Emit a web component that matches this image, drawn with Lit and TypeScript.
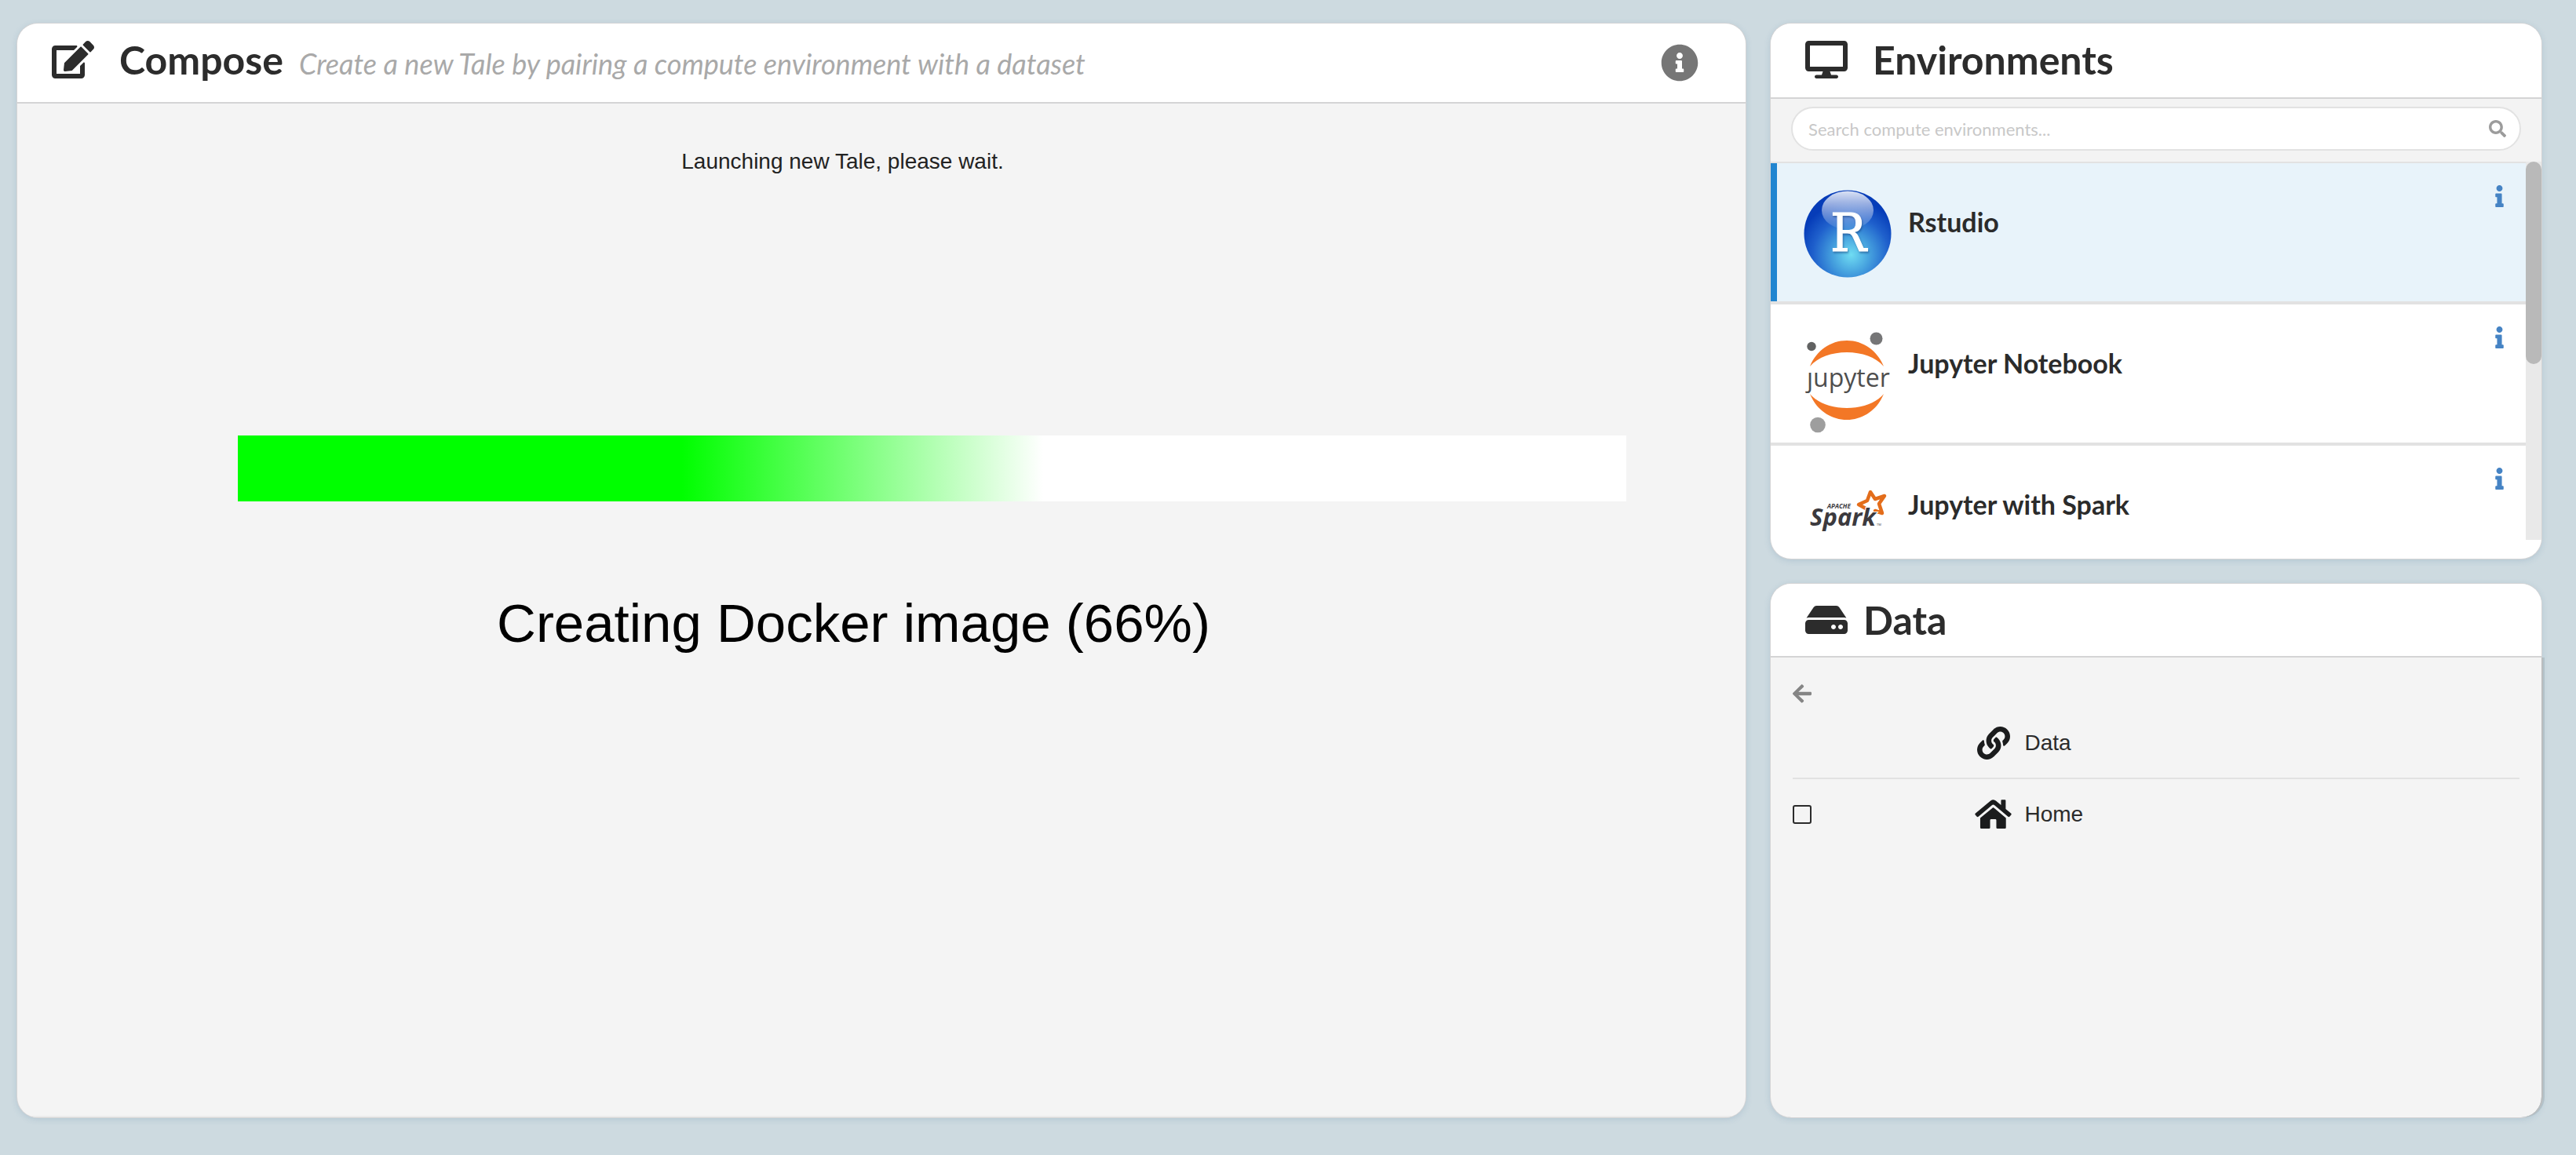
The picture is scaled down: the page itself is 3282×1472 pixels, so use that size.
import { LitElement, html, css, svg } from "lit";
import { customElement, property, state } from "lit/decorators.js";
import { classMap } from "lit/directives/class-map.js";

const ICONS: Record<string, { box: string; d: string }> = {
  edit: {
    box: "0 0 576 512",
    d: "M402.6 83.2l90.2 90.2c3.8 3.8 3.8 10 0 13.8L274.4 405.6l-92.8 10.3c-12.4 1.4-22.9-9.1-21.5-21.5l10.3-92.8L388.8 83.2c3.8-3.8 10-3.8 13.8 0zm162-22.9l-48.8-48.8c-15.2-15.2-39.9-15.2-55.2 0l-35.4 35.4c-3.8 3.8-3.8 10 0 13.8l90.2 90.2c3.8 3.8 10 3.8 13.8 0l35.4-35.4c15.2-15.3 15.2-40 0-55.2zM384 346.2V448H64V128h229.8c3.2 0 6.2-1.3 8.5-3.5l40-40c7.6-7.6 2.2-20.5-8.5-20.5H48C21.5 64 0 85.5 0 112v352c0 26.5 21.5 48 48 48h352c26.5 0 48-21.5 48-48V306.2c0-10.7-12.9-16-20.5-8.5l-40 40c-2.2 2.3-3.5 5.3-3.5 8.5z",
  },
  desktop: {
    box: "0 0 576 512",
    d: "M528 0H48C21.5 0 0 21.5 0 48v320c0 26.5 21.5 48 48 48h192l-16 48h-72c-13.3 0-24 10.7-24 24s10.7 24 24 24h272c13.3 0 24-10.7 24-24s-10.7-24-24-24h-72l-16-48h192c26.5 0 48-21.5 48-48V48c0-26.5-21.5-48-48-48zm-16 352H64V64h448v288z",
  },
  hdd: {
    box: "0 0 576 512",
    d: "M576 304v96c0 26.51-21.49 48-48 48H48c-26.51 0-48-21.49-48-48v-96c0-26.51 21.49-48 48-48h480c26.51 0 48 21.49 48 48zm-48-80a79.557 79.557 0 0 1 30.777 6.165L462.25 85.374A48.003 48.003 0 0 0 422.311 64H153.689a48 48 0 0 0-39.938 21.374L17.223 230.165A79.557 79.557 0 0 1 48 224h480zm-48 96c-17.673 0-32 14.327-32 32s14.327 32 32 32 32-14.327 32-32-14.327-32-32-32zm-96 0c-17.673 0-32 14.327-32 32s14.327 32 32 32 32-14.327 32-32-14.327-32-32-32z",
  },
  infoCircle: {
    box: "0 0 512 512",
    d: "M256 8C119.043 8 8 119.083 8 256c0 136.997 111.043 248 248 248s248-111.003 248-248C504 119.083 392.957 8 256 8zm0 110c23.196 0 42 18.804 42 42s-18.804 42-42 42-42-18.804-42-42 18.804-42 42-42zm56 254c0 6.627-5.373 12-12 12h-88c-6.627 0-12-5.373-12-12v-24c0-6.627 5.373-12 12-12h12v-64h-12c-6.627 0-12-5.373-12-12v-24c0-6.627 5.373-12 12-12h64c6.627 0 12 5.373 12 12v100h12c6.627 0 12 5.373 12 12v24z",
  },
  info: {
    box: "0 0 192 512",
    d: "M20 424.229h20V279.771H20c-11.046 0-20-8.954-20-20V212c0-11.046 8.954-20 20-20h112c11.046 0 20 8.954 20 20v212.229h20c11.046 0 20 8.954 20 20V492c0 11.046-8.954 20-20 20H20c-11.046 0-20-8.954-20-20v-47.771c0-11.046 8.954-20 20-20zM96 0C56.235 0 24 32.235 24 72s32.235 72 72 72 72-32.235 72-72S135.764 0 96 0z",
  },
  search: {
    box: "0 0 512 512",
    d: "M505 442.7L405.3 343c-4.5-4.5-10.6-7-17-7H372c27.6-35.3 44-79.7 44-128C416 93.1 322.9 0 208 0S0 93.1 0 208s93.1 208 208 208c48.3 0 92.7-16.4 128-44v16.3c0 6.4 2.5 12.5 7 17l99.7 99.7c9.4 9.4 24.6 9.4 33.9 0l28.3-28.3c9.4-9.4 9.4-24.6.1-34zM208 336c-70.7 0-128-57.2-128-128 0-70.7 57.2-128 128-128 70.7 0 128 57.2 128 128 0 70.7-57.2 128-128 128z",
  },
  arrowLeft: {
    box: "0 0 448 512",
    d: "M257.5 445.1l-22.2 22.2c-9.4 9.4-24.6 9.4-33.9 0L7 273c-9.4-9.4-9.4-24.6 0-33.9L201.4 44.7c9.4-9.4 24.6-9.4 33.9 0l22.2 22.2c9.5 9.5 9.3 25-.4 34.3L136.6 216H424c13.3 0 24 10.7 24 24v32c0 13.3-10.7 24-24 24H136.6l120.5 114.8c9.8 9.3 10 24.8.4 34.3z",
  },
  link: {
    box: "0 0 512 512",
    d: "M326.612 185.391c59.747 59.809 58.927 155.698.36 214.59-.11.12-.24.25-.36.37l-67.2 67.2c-59.27 59.27-155.699 59.262-214.96 0-59.27-59.26-59.27-155.7 0-214.96l37.106-37.106c9.84-9.84 26.786-3.3 27.294 10.606.648 17.722 3.826 35.527 9.69 52.721 1.986 5.822.567 12.262-3.783 16.612l-13.087 13.087c-28.026 28.026-28.905 73.66-1.155 101.96 28.024 28.579 74.086 28.749 102.325.51l67.2-67.19c28.191-28.191 28.073-73.757 0-101.83-3.701-3.694-7.429-6.564-10.341-8.569a16.037 16.037 0 0 1-6.947-12.606c-.396-10.567 3.348-21.456 11.698-29.806l21.054-21.055c5.521-5.521 14.182-6.199 20.584-1.731a152.482 152.482 0 0 1 20.522 17.197zM467.547 44.449c-59.261-59.262-155.69-59.27-214.96 0l-67.2 67.2c-.12.12-.25.25-.36.37-58.566 58.892-59.387 154.781.36 214.59a152.454 152.454 0 0 0 20.521 17.196c6.402 4.468 15.064 3.789 20.584-1.731l21.054-21.055c8.35-8.35 12.094-19.239 11.698-29.806a16.037 16.037 0 0 0-6.947-12.606c-2.912-2.005-6.64-4.875-10.341-8.569-28.073-28.073-28.191-73.639 0-101.83l67.2-67.19c28.239-28.239 74.3-28.069 102.325.51 27.75 28.3 26.872 73.934-1.155 101.96l-13.087 13.087c-4.35 4.35-5.769 10.79-3.783 16.612 5.864 17.194 9.042 34.999 9.69 52.721.509 13.906 17.454 20.446 27.294 10.606l37.106-37.106c59.271-59.259 59.271-155.699.001-214.959z",
  },
  home: {
    box: "829 884 142 142",
    d: "M831 953L890 904Q900 896 910 904L930 920V903Q930 900 933 900H945Q948 900 948 903V935L969 953Q971 955 969 958L963 965Q960 967 957 965L905 921Q900 917 895 921L843 965Q840 967 837 965L831 958Q829 955 831 953ZM900 929L949 970V1007Q949 1011 945 1011H916Q912 1011 912 1007V979Q912 975 908 975H892Q888 975 888 979V1007Q888 1011 884 1011H854Q850 1011 850 1007V970Z",
  },
};

const icon = (name: string, cls = "") => html`
  <svg class="icon ${cls}" viewBox=${ICONS[name].box} aria-hidden="true">
    ${svg`<path d=${ICONS[name].d} fill="currentColor"></path>`}
  </svg>
`;

const LOGOS: Record<string, unknown> = {
  rstudio: html`
    <svg class="logo" viewBox="0 0 112 112" aria-hidden="true">
      <defs>
        <radialGradient id="ball" cx="0.54" cy="0.74" r="0.62">
          <stop offset="0" stop-color="#6fdcf2"></stop>
          <stop offset="0.35" stop-color="#45a0de"></stop>
          <stop offset="0.7" stop-color="#1f60cc"></stop>
          <stop offset="1" stop-color="#063cb8"></stop>
        </radialGradient>
        <linearGradient id="gloss" x1="0" y1="0" x2="0" y2="1">
          <stop offset="0" stop-color="#fff" stop-opacity="0.85"></stop>
          <stop offset="1" stop-color="#fff" stop-opacity="0.06"></stop>
        </linearGradient>
      </defs>
      <circle cx="56" cy="56" r="55.5" fill="url(#ball)"></circle>
      <ellipse cx="56" cy="26" rx="33" ry="24.5" fill="url(#gloss)"></ellipse>
      <text class="r-letter" x="34" y="78">R</text>
    </svg>
  `,
  jupyter: html`
    <svg class="logo tall" viewBox="0 0 112 130" aria-hidden="true">
      <path d="M8 45C16 25 34 12 55 12S94 25 102 45C92 33 74 27 55 27S18 33 8 45Z" fill="#f37726"></path>
      <path d="M8 80C16 100 34 113 55 113S94 100 102 80C92 92 74 98 55 98S18 92 8 80Z" fill="#f37726"></path>
      <circle cx="10" cy="19.5" r="5.7" fill="#616262"></circle>
      <circle cx="92.5" cy="9.5" r="8" fill="#767677"></circle>
      <circle cx="18" cy="119.5" r="9.8" fill="#9e9e9e"></circle>
      <text class="jup" x="4" y="71">ȷupyter</text>
    </svg>
  `,
  spark: html`
    <svg class="logo tall" viewBox="0 0 112 130" aria-hidden="true">
      <path
        d="M79 46L70 41L81 36L85 25L91 34L103 30L96 40L100 52L91 49"
        fill="none"
        stroke="#e36d1b"
        stroke-width="4.5"
        stroke-linejoin="round"
        stroke-linecap="round"
      ></path>
      <text class="apache" x="30" y="46">APACHE</text>
      <text class="spark" x="8" y="68">Spark</text>
      <text class="tm" x="93" y="68">TM</text>
    </svg>
  `,
};

interface Environment {
  name: string;
  logo: string;
}

interface Folder {
  name: string;
  icon: string;
  selectable: boolean;
}

const sharedStyles = css`
  * {
    box-sizing: border-box;
  }
  .icon {
    display: block;
    flex: none;
  }
  .head {
    display: flex;
    align-items: center;
    gap: 32px;
    background: #fff;
    border-bottom: 2px solid #d4d4d5;
    border-radius: 26px 26px 0 0;
    color: #2c2c2c;
    padding: 0 44px;
    flex: none;
  }
  .head-icon {
    width: 54px;
    height: 48px;
  }
  h2 {
    margin: 0;
    font: 700 50px/60px Lato, sans-serif;
    white-space: nowrap;
  }
  button {
    border: 0;
    padding: 0;
    background: none;
    font: inherit;
    cursor: pointer;
    display: block;
  }
  :host {
    display: flex;
    flex-direction: column;
    min-width: 0;
    min-height: 0;
    border-radius: 26px;
    box-shadow: 0 0 0 1px #d4d4d5, 0 2px 8px rgba(60, 110, 150, 0.2);
    background: #f4f4f4;
  }
`;

@customElement("compose-panel")
export class ComposePanel extends LitElement {
  @property({ type: String }) stage = "";
  @property({ type: Number }) percent = 0;

  static styles = [
    sharedStyles,
    css`
      :host {
        overflow: hidden;
      }
      .head {
        height: 102px;
        padding: 0 60px 8px 44px;
      }
      .titles {
        flex: 1;
        display: flex;
        align-items: baseline;
        gap: 20px;
      }
      .tagline {
        margin: 0;
        font: italic 400 36px/40px Lato, sans-serif;
        color: #a9a9a9;
        white-space: nowrap;
      }
      .help {
        color: #767676;
        padding-top: 8px;
      }
      .help-icon {
        width: 48px;
        height: 48px;
      }
      .body {
        flex: 1;
        border-bottom: 2px solid #ebebeb;
        padding: 58px 152px 0 281px;
        color: #222;
        font: 28px/32px "Liberation Sans", Arial, sans-serif;
      }
      .status {
        margin: 0 0 333px;
        padding-right: 228px;
        text-align: center;
      }
      .bar {
        height: 84px;
        background: linear-gradient(to right, #0f0 32%, #fff 58%);
      }
      .stage {
        margin: 114px 0 0;
        padding-right: 200px;
        text-align: center;
        color: #000;
        font: 69px/84px "Liberation Sans", Arial, sans-serif;
      }
    `,
  ];

  render() {
    return html`
      <header class="head">
        ${icon("edit", "head-icon")}
        <div class="titles">
          <h2>Compose</h2>
          <p class="tagline">Create a new Tale by pairing a compute environment with a dataset</p>
        </div>
        <button class="help" aria-label="About composing">${icon("infoCircle", "help-icon")}</button>
      </header>
      <section class="body">
        <p class="status">Launching new Tale, please wait.</p>
        <div
          class="bar"
          role="progressbar"
          aria-label="Launch progress"
          aria-valuemin="0"
          aria-valuemax="100"
          aria-valuenow=${this.percent}
        ></div>
        <p class="stage">${this.stage} (${this.percent}%)</p>
      </section>
    `;
  }
}

@customElement("environment-panel")
export class EnvironmentPanel extends LitElement {
  @property({ attribute: false }) environments: Environment[] = [];
  @state() private selected = "Rstudio";

  static styles = [
    sharedStyles,
    css`
      :host {
        background: #fff;
        overflow: hidden;
      }
      .head {
        height: 96px;
        padding-bottom: 2px;
      }
      .search {
        flex: none;
        background: #f3f3f3;
        padding: 10px 26px 14px;
      }
      .field {
        display: flex;
        align-items: center;
        height: 56px;
        padding: 0 17px 0 20px;
        border: 2px solid #e2e2e2;
        border-radius: 28px;
        background: #fff;
        color: #9c9c9c;
      }
      .query {
        flex: 1;
        min-width: 0;
        border: 0;
        outline: 0;
        padding: 2px 0 0;
        background: none;
        font: 22px/28px Lato, sans-serif;
        color: #222;
      }
      .query::placeholder {
        color: #c8c8c8;
        opacity: 1;
      }
      .search-icon {
        width: 22px;
        height: 22px;
      }
      .scroller {
        flex: 1;
        min-height: 0;
        display: flex;
        margin-bottom: 24px;
      }
      .list {
        flex: 1;
        margin: 0;
        padding: 0;
        list-style: none;
        overflow-y: auto;
        scrollbar-width: none;
      }
      .row {
        display: flex;
        align-items: flex-start;
        height: 180px;
        padding: 28px 28px 0 42px;
        box-shadow: inset 0 2px #e2e2e2, inset 0 -2px #e2e2e2;
        border: solid transparent;
        border-width: 2px 0;
      }
      .row.selected {
        background: linear-gradient(to right, #2185d0 8px, #e8f3fa 8px) padding-box;
      }
      .row,
      .row.selected {
        box-shadow: none;
        border-color: #e2e2e2;
      }
      .pick {
        flex: 1;
        display: flex;
        align-items: flex-start;
        gap: 21px;
        text-align: left;
        color: #2b2b2b;
      }
      .logo {
        display: block;
        flex: none;
        width: 112px;
        height: 112px;
        margin-top: 6px;
        overflow: visible;
      }
      .logo.tall {
        height: 130px;
      }
      .name {
        padding-top: 26px;
        font: 700 34px/42px Lato, sans-serif;
      }
      .about {
        color: #4583c4;
      }
      .info-icon {
        width: 11px;
        height: 28px;
      }
      .r-letter {
        font: 68px "DejaVu Serif Condensed", "DejaVu Serif", serif;
        fill: #fff;
        stroke: #fff;
        stroke-width: 1px;
        filter: drop-shadow(1px 2px 1px rgba(20, 60, 120, 0.5));
      }
      .jup {
        font: 32px "Open Sans", sans-serif;
        fill: #4e4e4e;
      }
      .apache {
        font: italic 700 8px "Open Sans", sans-serif;
        fill: #3c3a3e;
      }
      .spark {
        font: italic 700 31px "Open Sans", sans-serif;
        fill: #3c3a3e;
        stroke: #fff;
        stroke-width: 2px;
        paint-order: stroke;
      }
      .tm {
        font: 4px "Open Sans", sans-serif;
        fill: #3c3a3e;
      }
      .track {
        flex: none;
        width: 20px;
        background: #e9e9e9;
      }
      .thumb {
        height: 53.5%;
        border-radius: 10px;
        background: #b9b9b9;
      }
    `,
  ];

  render() {
    return html`
      <header class="head">
        ${icon("desktop", "head-icon")}
        <h2>Environments</h2>
      </header>
      <div class="search">
        <label class="field">
          <input
            class="query"
            type="text"
            aria-label="Search compute environments"
            placeholder="Search compute environments..."
          />
          ${icon("search", "search-icon")}
        </label>
      </div>
      <div class="scroller">
        <ul class="list">
          ${this.environments.map(
            (env) => html`
              <li class=${classMap({ row: true, selected: env.name === this.selected })}>
                <button class="pick" @click=${() => (this.selected = env.name)}>
                  ${LOGOS[env.logo]}
                  <span class="name">${env.name}</span>
                </button>
                <button class="about" aria-label="About ${env.name}">${icon("info", "info-icon")}</button>
              </li>
            `
          )}
        </ul>
        <div class="track"><div class="thumb"></div></div>
      </div>
    `;
  }
}

@customElement("data-panel")
export class DataPanel extends LitElement {
  @property({ attribute: false }) folders: Folder[] = [];

  static styles = [
    sharedStyles,
    css`
      .head {
        height: 94px;
        gap: 20px;
      }
      .body {
        flex: 1;
        padding: 32px 28px;
        border-radius: 0 0 26px 26px;
        box-shadow: 2px 0 #babdbf, 4px 0 #b3c2ca;
      }
      .back {
        color: #858585;
      }
      .back-icon {
        width: 24px;
        height: 28px;
      }
      table {
        width: 100%;
        margin-top: 4px;
        border-collapse: collapse;
        table-layout: fixed;
        color: #2b2b2b;
        font: 28px/32px "Liberation Sans", Arial, sans-serif;
      }
      td {
        height: 90px;
        padding: 0;
      }
      tr + tr td {
        border-top: 2px solid #e2e2e2;
      }
      .check {
        width: 25%;
      }
      .box {
        appearance: none;
        display: block;
        width: 24px;
        height: 24px;
        margin: 0;
        border: 2px solid #2b2b2b;
        border-radius: 3px;
      }
      .entry {
        display: flex;
        align-items: center;
        gap: 16px;
        color: inherit;
        text-decoration: none;
      }
      .slot {
        display: flex;
        justify-content: center;
        width: 48px;
        color: #1b1c1d;
      }
      .link {
        width: 42px;
        height: 42px;
      }
      .home {
        width: 47px;
        height: 47px;
      }
    `,
  ];

  render() {
    return html`
      <header class="head">
        ${icon("hdd", "head-icon")}
        <h2>Data</h2>
      </header>
      <section class="body">
        <button class="back" aria-label="Back">${icon("arrowLeft", "back-icon")}</button>
        <table>
          <tbody>
            ${this.folders.map(
              (f) => html`
                <tr>
                  <td class="check">
                    ${f.selectable
                      ? html`<input class="box" type="checkbox" aria-label="Select ${f.name}" />`
                      : null}
                  </td>
                  <td>
                    <a class="entry" href="#${f.icon}">
                      <span class="slot">${icon(f.icon, f.icon)}</span>
                      <span>${f.name}</span>
                    </a>
                  </td>
                </tr>
              `
            )}
          </tbody>
        </table>
      </section>
    `;
  }
}

@customElement("app-root")
export class AppRoot extends LitElement {
  private environments: Environment[] = [
    { name: "Rstudio", logo: "rstudio" },
    { name: "Jupyter Notebook", logo: "jupyter" },
    { name: "Jupyter with Spark", logo: "spark" },
  ];

  private folders: Folder[] = [
    { name: "Data", icon: "link", selectable: false },
    { name: "Home", icon: "home", selectable: true },
  ];

  static styles = css`
    :host {
      display: block;
    }
    .page {
      box-sizing: border-box;
      height: 100vh;
      display: grid;
      grid-template-columns: minmax(0, 74fr) minmax(0, 33fr);
      gap: 32px;
      padding: 30px 44px 48px 22px;
      background: #cddae0;
    }
    .side {
      display: grid;
      grid-template-rows: minmax(0, 341fr) minmax(0, 340fr);
      gap: 32px;
      min-height: 0;
    }
  `;

  render() {
    return html`
      <main class="page">
        <compose-panel stage="Creating Docker image" percent="66"></compose-panel>
        <div class="side">
          <environment-panel .environments=${this.environments}></environment-panel>
          <data-panel .folders=${this.folders}></data-panel>
        </div>
      </main>
    `;
  }
}
